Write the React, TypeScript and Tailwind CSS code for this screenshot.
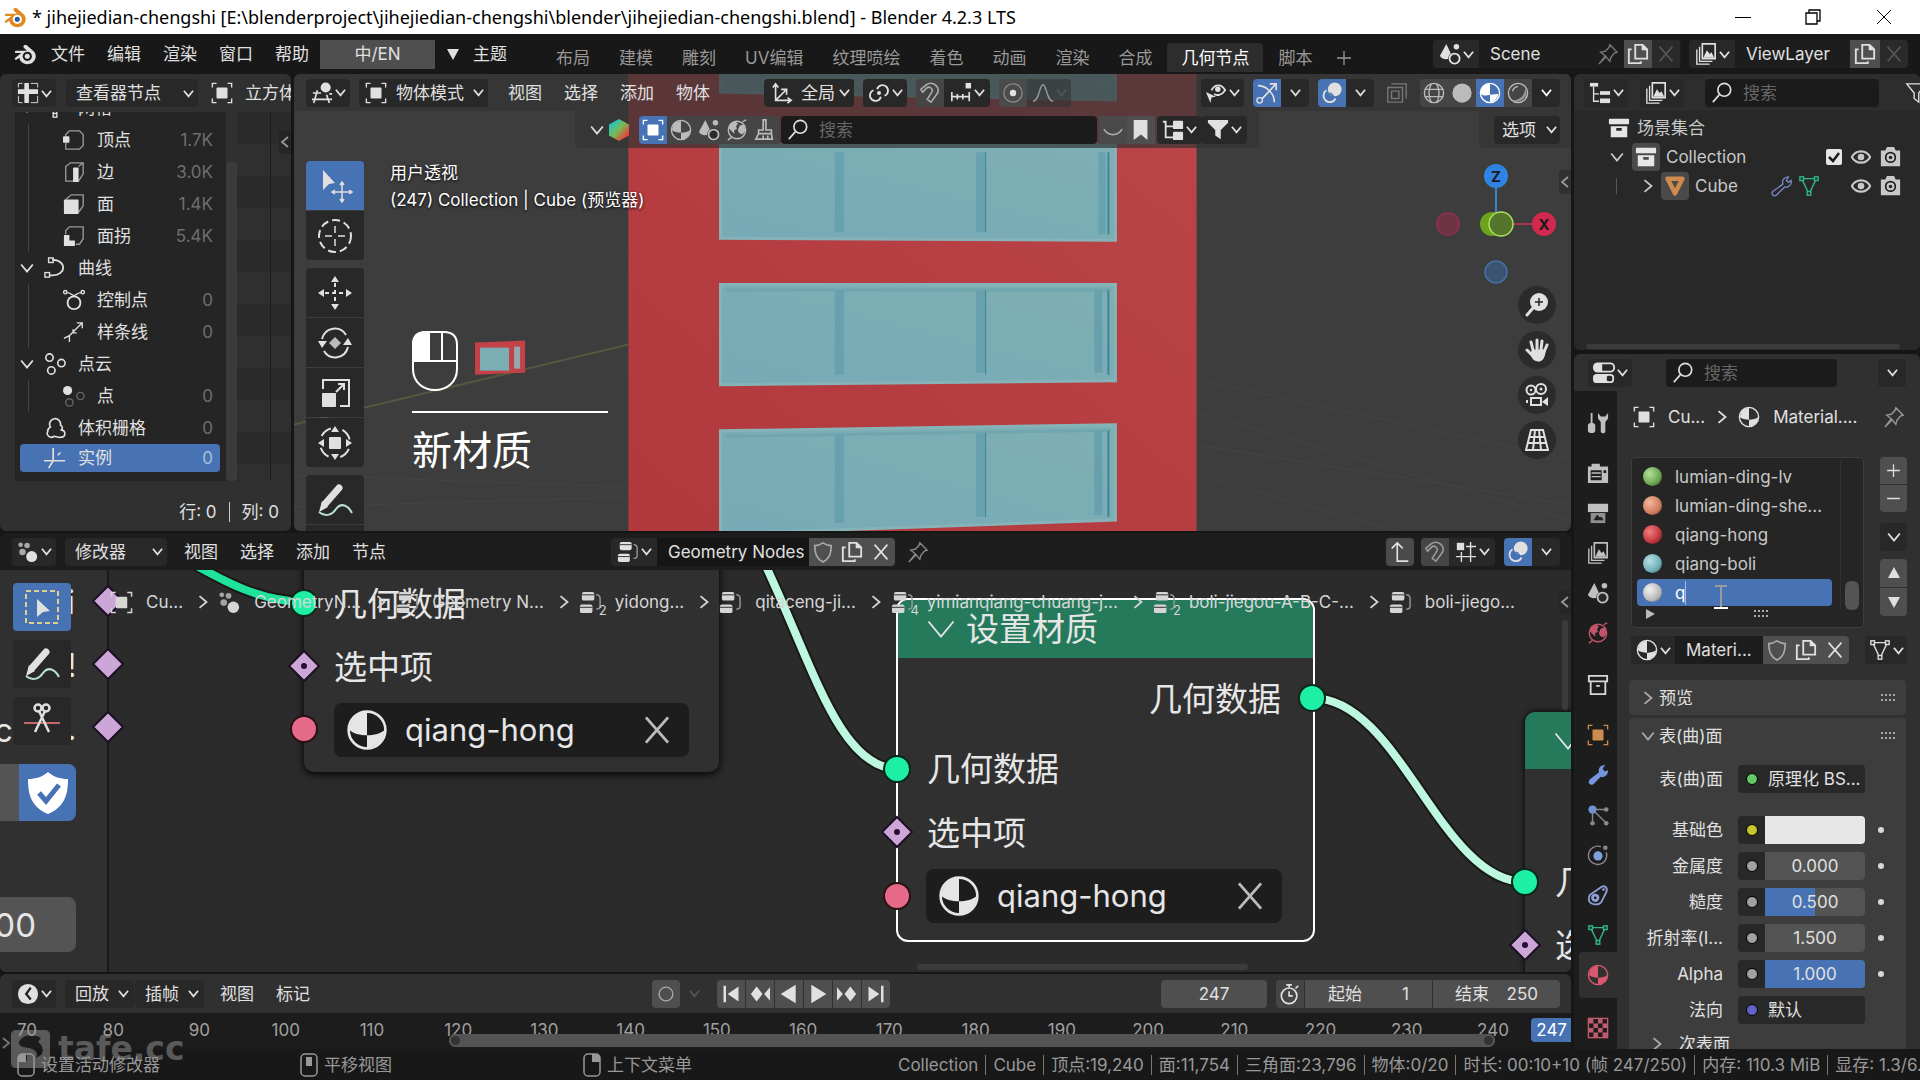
import type { ReactNode } from "react";
import clsx from "clsx";

const S = { fill: "none", stroke: "currentColor", strokeWidth: 1.5 } as const;
const F = { fill: "currentColor" } as const;

const icons: Record<string, ReactNode> = {
  sheet: (
    <>
      <path {...F} d="M8 1h5v7h10v5H13v10H8V13H1V8h7z" />
      <path {...S} strokeWidth={1} d="M1.5 6V1.5H6M15 1.5h7.5V6M1.5 15v7.5H6M15 22.5h7.5V15" />
    </>
  ),
  object: (
    <>
      <rect {...F} x="6" y="6" width="12" height="12" rx="1" />
      <path {...S} d="M1.5 6V1.5H6M18 1.5h4.5V6M1.5 18v4.5H6M18 22.5h4.5V18" />
    </>
  ),
  view3d: (
    <>
      <circle {...F} cx="16" cy="6" r="5.5" />
      <path {...S} strokeWidth={1.8} d="M2 12h9M1 19h22M7 9 3 23M17 14l3 9M20 13h3" />
    </>
  ),
  vertex: (
    <>
      <path {...S} stroke="#999" d="M7 2h11l4 4v12l-4 4H3V15M3 8V6l4-4" />
      <rect {...F} x="0" y="8" width="7" height="7" rx="1" />
    </>
  ),
  edge: (
    <>
      <path {...S} stroke="#999" d="M3 6l5-4h14v12l-5 8H3zM17 6l5-4" />
      <rect {...F} x="11" y="7" width="6" height="16" rx="1" />
    </>
  ),
  face: (
    <>
      <path {...S} stroke="#999" d="M3 7l6-5h13v12l-5 7" />
      <rect {...F} x="1" y="7" width="16" height="16" rx="1" />
    </>
  ),
  corner: (
    <>
      <path {...S} stroke="#999" d="M3 10V6l4-4h15v13l-4 6h-4" />
      <path {...F} d="M1 11h6v6h6v6H1z" />
    </>
  ),
  curve: (
    <>
      <path {...S} strokeWidth={2} d="M9 3c16 0 16 17 0 17H6" />
      <rect {...S} x="5" y="1" width="5" height="5" />
      <rect {...S} x="1" y="17" width="5" height="5" />
    </>
  ),
  ctrl: (
    <>
      <circle {...S} strokeWidth={2} cx="12" cy="15" r="7" />
      <path {...S} d="M4 4c5 0 5 3 8 3s3-3 8-3" />
      <circle {...S} cx="2.5" cy="3.5" r="1.8" />
      <circle {...S} cx="21.5" cy="3.5" r="1.8" />
    </>
  ),
  spline: <path {...S} d="M1 19l6-3 5-5 9-9M15 2h6v6M7 16v7M11 9v4h4" />,
  points: (
    <>
      <circle {...S} strokeWidth={1.8} cx="6" cy="5" r="4" />
      <circle {...S} strokeWidth={1.8} cx="19" cy="11" r="4" />
      <circle {...S} strokeWidth={1.8} cx="8" cy="19" r="4" />
    </>
  ),
  point: (
    <>
      <circle {...F} cx="5" cy="6" r="5" />
      <circle {...S} stroke="#666" cx="19" cy="12" r="4" />
      <circle {...S} stroke="#666" cx="7" cy="19" r="4" />
    </>
  ),
  cloud: <path {...S} strokeWidth={1.8} d="M7 11a6 6 0 1 1 11-2c3 1 2 4 1 5 5 1 5 8 0 8-3 1-6-1-8-1-4 3-9-1-7-5 0-3 1-4 3-5z" />,
  axes: <path {...S} strokeWidth={1.8} d="M10 1v14M10 15H0M10 15h13M10 15l-5 8M15 9l3-3" />,
  orient: <path {...S} strokeWidth={1.8} d="M5 3v17h16M2 6l3-4 3 4M18 17l4 3-4 3M5 20 16 9M11 8h6v6" />,
  pivot: (
    <>
      <path {...S} strokeWidth={2} d="M10 8a6 6 0 1 1 8 7M14 16a6 6 0 1 1-8-7" />
      <circle {...F} cx="12" cy="12" r="2.2" />
    </>
  ),
  magnet: <path {...S} strokeWidth={1.8} d="M2 8l6-5c7-5 17 3 11 11l-6 8-4-3 5-8c2-4-3-7-6-4l-4 4z" />,
  snapinc: (
    <>
      <path {...S} strokeWidth={1.8} d="M2 11v10M8 13v6M14 13v6M21 11v10M2 16h19" />
      <rect {...F} x="17" y="1" width="6" height="6" />
    </>
  ),
  snapgrid: (
    <>
      <path {...S} d="M7 12v11M17 1v22M12 6h11M1 17h22" />
      <rect {...F} x="2" y="2" width="8" height="8" />
    </>
  ),
  prop: (
    <>
      <circle {...S} stroke="#888" cx="12" cy="12" r="10" />
      <circle {...F} cx="12" cy="12" r="3.5" />
    </>
  ),
  falloff: <path {...S} d="M1 21C8 21 8 3 12 3s4 18 11 18" />,
  visible: (
    <>
      <path {...S} strokeWidth={2} d="M7 9c4-7 11-7 15 0-4 6-9 6-12 4" />
      <circle {...F} cx="14" cy="8" r="3" />
      <path {...F} d="M1 11l11 5-5 1-1 6z" />
    </>
  ),
  gizmo: (
    <>
      <path {...S} strokeWidth={1.8} d="M2 4c9 0 18 8 18 18M5 20 21 3M15 2h7v7" />
      <circle {...S} fill="#4772b3" cx="4" cy="20" r="3" />
    </>
  ),
  overlay: (
    <>
      <circle {...F} cx="15" cy="8" r="7.5" />
      <path {...S} strokeWidth={2} d="M6 9a7 7 0 1 0 10 9" />
      <path {...S} stroke="#4772b3" d="M9 12a7 7 0 0 1 5 5" />
    </>
  ),
  xray: <path {...S} d="M2 6h16v16H2zM6 2h16v16M6 14V10h8v8H6z" />,
  wire: (
    <>
      <circle {...S} cx="12" cy="12" r="10.5" />
      <path {...S} d="M2 8h20M2 16h20M9 2c-3 6-3 14 0 20M15 2c3 6 3 14 0 20" />
    </>
  ),
  solid: <circle {...F} cx="12" cy="12" r="10.5" />,
  matprev: (
    <>
      <circle {...S} cx="12" cy="12" r="10.5" />
      <path {...F} d="M12 14V2a10 10 0 0 0-10 11c3 2 6 2 10 1zM12 14v8a10 10 0 0 0 9-9z" />
    </>
  ),
  rendered: (
    <>
      <circle {...S} cx="12" cy="12" r="10.5" />
      <path {...S} d="M6 10c1-3 3-5 6-5" />
      <path {...F} d="M20 7a10 10 0 0 1-14 13c8 0 13-5 14-13z" opacity=".7" />
    </>
  ),
  material: (
    <>
      <circle {...S} cx="12" cy="12" r="10.5" />
      <path {...F} d="M12 2v13C8 15 4 14 2 12A10 10 0 0 1 12 2zM12 15c4 0 8-1 10-3a10 10 0 0 1-10 10z" />
    </>
  ),
  scene: (
    <>
      <path {...F} d="M8 1l6 13c-2 5-11 5-13 0z" />
      <circle {...F} cx="19" cy="4" r="3" />
      <circle cx="17" cy="17" r="7" fill="#2a2a2a" />
      <circle {...S} strokeWidth={2} cx="17" cy="17" r="5.5" />
    </>
  ),
  world: (
    <>
      <circle {...S} cx="12" cy="12" r="9.5" />
      <path {...F} d="M4 6c3-3 7-4 9-1l-2 3 1 3-3 1v4l-3-3-3-3zM15 7l5-1 1 7-3 4-4-2-1-3z" />
      <path {...S} d="M18 3l4-2M2 23l4-3" />
    </>
  ),
  brush: <path {...S} strokeWidth={1.8} d="M10 1h3v11h6v4H5v-4h5zM5 16l-3 6h18l-1-6M10 22v-4M15 22v-4" />,
  search: (
    <>
      <circle {...S} strokeWidth={1.8} cx="14.5" cy="8.5" r="7" />
      <path {...S} strokeWidth={1.8} d="M9 14l-7 8" />
    </>
  ),
  arc: <path {...S} strokeWidth={1.8} d="M2 11c5 8 15 8 20 0" />,
  bookmark: <path {...F} d="M4 1h15v22l-7-6-8 6z" />,
  tree: (
    <>
      <path {...S} strokeWidth={2} d="M1 3h4M4 2v18h8M4 8h8" />
      <rect {...F} x="12" y="2" width="11" height="9" rx="1" />
      <rect {...F} x="12" y="14" width="11" height="9" rx="1" />
    </>
  ),
  outliner: (
    <>
      <path {...S} d="M5 5v16h6M5 13h6" />
      <rect {...F} x="1" y="1" width="9" height="4" />
      <rect {...F} x="12" y="10" width="11" height="4" />
      <rect {...F} x="12" y="18" width="11" height="5" />
    </>
  ),
  funnel: <path {...F} d="M1 1h22v3l-8 8v10l-6-4v-6L1 4z" />,
  funnelLine: <path {...S} d="M2 2h21l-8 10v10l-5-4v-6z" />,
  layers: (
    <>
      <path {...S} strokeWidth={1.8} d="M8 1h14v16H8z" />
      <path {...F} d="M9 16l4-8 3 4 2-2 3 6z" />
      <path {...S} d="M5 4v16h14M2 7v16h14" />
    </>
  ),
  copy: (
    <>
      <path {...S} strokeWidth={2} d="M9 2h8l5 5v10H9z" />
      <path {...F} d="M16 1l7 7h-7z" />
      <path {...S} strokeWidth={2} d="M5 7H2v15h13v-2" />
    </>
  ),
  close: <path {...S} strokeWidth={1.8} d="M5 4l14 16M19 4 5 20" />,
  pin: <path {...S} d="M14 2l8 8-3 1-4 5-1 4-4-5-8 8 7-9-5-4 5-1 4-4z" />,
  shield: <path {...S} strokeWidth={1.8} d="M12 2c3 2 6 3 9 3 0 9-2 14-9 18C5 19 3 14 3 5c3 0 6-1 9-3z" />,
  collection: (
    <>
      <rect {...F} x="1" y="2" width="22" height="6" rx="1" />
      <path {...F} fillRule="evenodd" d="M3 10h18v12H3zm6 2v3h6v-3z" />
    </>
  ),
  archive: <path {...S} strokeWidth={2} d="M2 2h20v6H2zM4 8v14h16V8M10 13h4" />,
  cone: <path {...S} strokeWidth={5} strokeLinejoin="round" d="M4 4h16l-8 16z" />,
  wrench: <path {...S} d="M14 10c-1-4 1-8 6-8l-2 4 2 2 3-2c1 5-3 8-7 7L7 22c-3 2-6-1-4-4z" />,
  wrenchFill: <path {...F} d="M13 9c-1-5 2-8 7-8l-3 4 2 3 4-1c0 5-4 8-8 7l-8 8c-3 2-7-1-4-5z" />,
  mesh: (
    <>
      <path {...S} d="M4 4h16M4 4l8 17 8-17" />
      <rect {...S} fill="#2a2a2a" x="2" y="2" width="4" height="4" />
      <rect {...S} fill="#2a2a2a" x="18" y="2" width="4" height="4" />
      <rect {...S} fill="#2a2a2a" x="10" y="18" width="4" height="4" />
    </>
  ),
  eye: (
    <>
      <path {...S} strokeWidth={2.5} d="M1 12c5-9 17-9 22 0-5 9-17 9-22 0z" />
      <circle {...F} cx="12" cy="12" r="4" />
    </>
  ),
  camera: (
    <>
      <path {...F} d="M1 5h5l2-4h8l2 4h5v18H1z" />
      <circle cx="12" cy="13" r="5.5" fill="none" stroke="#222" strokeWidth="2" />
      <circle cx="12" cy="13" r="2" fill="#222" />
    </>
  ),
  props: (
    <>
      <rect {...S} strokeWidth={2} x="1" y="1.5" width="22" height="9" rx="4" />
      <path {...F} d="M1 6c0-5 3-5 9-5v10C4 11 1 11 1 6z" />
      <rect {...F} x="0" y="13" width="23" height="10" rx="4" />
      <rect x="15" y="15" width="6" height="6" rx="2" fill="#2a2a2a" />
    </>
  ),
  tool: (
    <>
      <path {...S} strokeWidth={2} d="M5 1v11" />
      <rect {...F} x="1" y="12" width="8" height="11" rx="3" />
      <path {...F} d="M12 1v6l3 4v10c0 3 5 3 5 0V11l3-4V1l-3 4h-5z" />
    </>
  ),
  render: (
    <>
      <path {...F} fillRule="evenodd" d="M1 5h4V2h9v3h9v18H1zm3 4v11h12V9zm14 0v3h3V9z" />
      <path {...S} d="M5 12h10M5 16h10" />
    </>
  ),
  output: (
    <>
      <path {...F} d="M1 2h22v9H1z" />
      <path {...F} d="M4 12h16v11H4z" opacity=".7" />
      <path fill="#222" d="M7 20l4-6 3 3 2-1 2 4z" />
    </>
  ),
  particles: (
    <>
      <path {...S} stroke="#888" d="M6 6h15M6 6v15M6 6l14 14" />
      <circle {...F} cx="6" cy="6" r="4.5" />
      <g fill="#888">
        <circle cx="21" cy="6" r="2.5" />
        <circle cx="6" cy="21" r="2.5" />
        <circle cx="21" cy="21" r="2.5" />
      </g>
    </>
  ),
  physics: (
    <>
      <path {...S} stroke="#888" d="M15 3a10 10 0 1 0 6 6" />
      <circle {...F} cx="12" cy="13" r="5" />
      <circle cx="20" cy="4" r="2.5" fill="#888" />
    </>
  ),
  constraint: (
    <>
      <path {...S} strokeWidth={2} d="M3 12 16 3c4-2 7 2 5 6l-5 10c-3 5-12 4-14-1 0-2 0-4 1-6z" />
      <circle {...S} strokeWidth={3} cx="9" cy="15" r="3" />
      <circle {...F} cx="18" cy="6" r="1.5" />
    </>
  ),
  checker: (
    <>
      <rect {...S} x="1.5" y="1.5" width="21" height="21" />
      <path {...F} d="M2 2h5v5H2zM12 2h5v5h-5zM7 7h5v5H7zM17 7h5v5h-5zM2 12h5v5H2zM12 12h5v5h-5zM7 17h5v5H7zM17 17h5v5h-5z" />
    </>
  ),
  geonodes: (
    <>
      <circle {...F} cx="16" cy="17" r="6" />
      <g {...F} opacity=".7">
        <circle cx="4" cy="4" r="2.5" />
        <circle cx="11" cy="5" r="3" />
        <circle cx="6" cy="12" r="3.5" />
      </g>
    </>
  ),
  nodetree: (
    <>
      <rect {...F} x="3" y="1" width="13" height="9" rx="2" />
      <rect {...F} x="1" y="14" width="13" height="9" rx="2" />
      <path d="M3 4h13M1 17h13" stroke="#2a2a2a" />
      <path {...S} stroke="#999" d="M18 4c3 0 4 1 4 4v8c0 2-1 3-4 3" />
    </>
  ),
  parent: <path {...S} strokeWidth={1.8} d="M3 8l6-6 6 6M9 2v20h12" />,
  clock: (
    <>
      <circle {...F} cx="12" cy="12" r="11" />
      <path d="M15 5l-5 7 5 6" fill="none" stroke="#222" strokeWidth="2.5" />
    </>
  ),
  stopwatch: (
    <>
      <circle {...S} strokeWidth={1.8} cx="11" cy="14" r="8.5" />
      <path {...S} strokeWidth={1.8} d="M8 2h6M11 2v3M18 6l3-3M11 9v5h4" />
    </>
  ),
  record: <circle {...S} cx="12" cy="12" r="7.5" />,
  first: <path {...F} d="M3 2h3v20H3zM21 3v18L8 12z" />,
  prevKey: <path {...F} d="M8 3l7 9-7 9-7-9zM24 4v16l-7-8z" />,
  back: <path {...F} d="M20 1v22L2 12z" />,
  play: <path {...F} d="M4 1v22l18-11z" />,
  nextKey: <path {...F} d="M16 3l7 9-7 9-7-9zM0 4v16l7-8z" />,
  last: <path {...F} d="M21 2h-3v20h3zM3 3v18l13-9z" />,
  plus: <path {...S} strokeWidth={1.8} d="M12 3v18M3 12h18" />,
  minus: <path {...S} strokeWidth={1.8} d="M3 12h18" />,
  zoom: (
    <>
      <circle {...F} cx="14" cy="9" r="9" />
      <path {...S} strokeWidth={3} strokeLinecap="round" d="M8 15l-6 7" />
      <path d="M14 5v8M10 9h8" stroke="#222" strokeWidth="1.5" />
    </>
  ),
  hand: (
    <g {...S} strokeWidth={3} strokeLinecap="round">
      <path d="M8 12 6 4M12 11V2M16 12l1-9M19 14l3-7M7 17l-5-5" />
      <path fill="currentColor" d="M8 13h11c0 5-2 9-6 9s-5-3-6-6z" />
    </g>
  ),
  movie: (
    <>
      <circle {...S} strokeWidth={2} cx="6" cy="7" r="4.5" />
      <circle {...S} strokeWidth={2} cx="16" cy="6" r="5" />
      <circle {...F} cx="6" cy="7" r="1.2" />
      <circle {...F} cx="16" cy="6" r="1.5" />
      <path {...S} strokeWidth={2} d="M6 15h10v7H6zM2 17v3" />
      <path {...F} d="M23 14v9l-6-4z" />
    </>
  ),
  persp: <path {...S} strokeWidth={2} d="M6 2h12l5 20H1zM4 9h16M3 15h18M10 2 8 22M14 2l2 20" />,
};

function Icon({ name, className = "size-[22px]" }: { name: string; className?: string }) {
  return (
    <svg viewBox="0 0 24 24" className={clsx("shrink-0", className)} aria-hidden="true">
      {icons[name]}
    </svg>
  );
}

function Chevron({ className = "size-3", dir = "down" }: { className?: string; dir?: "down" | "right" | "left" }) {
  const d = { down: "M1 3l5 6 5-6", right: "M3 1l6 5-6 5", left: "M9 1 3 6l6 5" }[dir];
  return (
    <svg viewBox="0 0 12 12" className={clsx("shrink-0", className)} aria-hidden="true">
      <path d={d} fill="none" stroke="currentColor" strokeWidth="1.8" vectorEffect="non-scaling-stroke" />
    </svg>
  );
}

// editor type button and other icon + arrow menus
function IconMenu({ name, label, className }: { name: string; label: string; className?: string }) {
  return (
    <button
      aria-label={label}
      className={clsx("flex h-7 w-11 shrink-0 items-center justify-center gap-[2px] rounded bg-[#282828]", className)}
    >
      <Icon name={name} />
      <Chevron className="size-[11px]" />
    </button>
  );
}

function IconButton({ name, label, className }: { name: string; label: string; className?: string }) {
  return (
    <button aria-label={label} className={clsx("flex h-7 w-7 shrink-0 items-center justify-center", className)}>
      <Icon name={name} />
    </button>
  );
}

function Dropdown({ label, value, className }: { label: string; value: string; className?: string }) {
  return (
    <div className={clsx("relative flex h-7 shrink-0 items-center rounded bg-[#282828]", className)}>
      <select aria-label={label} className="h-full w-full appearance-none bg-transparent outline-none">
        <option>{value}</option>
      </select>
      <Chevron className="pointer-events-none absolute right-1 size-[11px]" />
    </div>
  );
}

function Search({ className }: { className: string }) {
  return (
    <label className={clsx("flex h-7 items-center rounded bg-[#1b1b1b] pl-[6px]", className)}>
      <Icon name="search" />
      <input
        type="text"
        aria-label="搜索"
        placeholder="搜索"
        className="min-w-0 flex-1 bg-transparent pl-[10px] placeholder:text-[#666] outline-none"
      />
    </label>
  );
}

function Menus({ items }: { items: string[] }) {
  return (
    <nav className="flex shrink-0">
      {items.map((item) => (
        <button key={item} className="w-14 text-center">
          {item}
        </button>
      ))}
    </nav>
  );
}

function BlenderLogo({ className, eye = "#fff" }: { className: string; eye?: string }) {
  return (
    <svg viewBox="0 0 24 24" className={clsx("shrink-0", className)} aria-hidden="true">
      <path
        fill="currentColor"
        d="M11 2.500c.800-.800 2-.800 3 0l8 7c3 4 2 9-2 12-4 2.500-9 2-12-1-1.500-1.500-2-3-2-4.500L3 18c-1.500 1-3-.500-1.500-2L8 11H2.500C.500 11 .500 8.500 2.500 8.500H14l-3-3c-1-1-1-2 0-3z"
      />
      <circle cx="14.500" cy="14.500" r="5" fill={eye} />
      <circle cx="14.500" cy="14.500" r="2.800" fill={eye === "#fff" ? "#2a5d9c" : "currentColor"} />
    </svg>
  );
}

function TitleBar() {
  return (
    <header className="flex h-[34px] shrink-0 items-center bg-white text-black">
      <BlenderLogo className="ml-1 size-[22px] text-[#e08a1e]" />
      <h1 className="ml-[6px] flex-1 truncate font-['Noto_Sans'] text-[18px]">
        * jihejiedian-chengshi [E:\blenderproject\jihejiedian-chengshi\blender\jihejiedian-chengshi.blend] - Blender
        4.2.3 LTS
      </h1>
      <button aria-label="Minimize" className="flex h-full w-[70px] items-center justify-center">
        <svg viewBox="0 0 16 16" className="size-4">
          <path d="M0 8.500h16" stroke="#000" />
        </svg>
      </button>
      <button aria-label="Restore" className="flex h-full w-[70px] items-center justify-center">
        <svg viewBox="0 0 16 16" className="size-4" fill="none" stroke="#000" strokeWidth="1.300">
          <path d="M1 4h11v11H1zM4 4V1h11v11h-3" />
        </svg>
      </button>
      <button aria-label="Close" className="flex h-full w-[72px] items-center justify-center">
        <svg viewBox="0 0 16 16" className="size-4">
          <path d="M1 1l14 14M15 1 1 15" stroke="#000" />
        </svg>
      </button>
    </header>
  );
}

const workspaces = ["布局", "建模", "雕刻", "UV编辑", "纹理喷绘", "着色", "动画", "渲染", "合成", "几何节点", "脚本"];

function TopBar() {
  return (
    <div className="flex h-10 shrink-0 items-center bg-[#181818]">
      <BlenderLogo className="ml-[14px] size-[22px]" eye="#181818" />
      <div className="ml-1">
        <Menus items={["文件", "编辑", "渲染", "窗口", "帮助"]} />
      </div>
      <button className="h-[29px] w-[115px] shrink-0 bg-[#4f4f4f] text-center">中/EN</button>
      <button className="ml-3 flex shrink-0 items-center gap-[14px]">
        <svg viewBox="0 0 12 12" className="size-3">
          <path d="M0 1h12L6 12z" fill="currentColor" />
        </svg>
        主题
      </button>
      <div role="tablist" className="ml-[35px] flex shrink-0 gap-px self-end pb-[2px]">
        {workspaces.map((w) => (
          <button
            key={w}
            role="tab"
            aria-selected={w === "几何节点"}
            className={clsx(
              "h-[29px] rounded-t px-[14px] leading-7",
              w === "几何节点" ? "bg-[#2d2d2d] text-white" : "text-[#989898]",
            )}
          >
            {w}
          </button>
        ))}
        <button aria-label="添加工作区" className="px-[10px] text-[#989898]">
          <svg viewBox="0 0 14 14" className="size-[14px]">
            <path d="M7 0v14M0 7h14" stroke="currentColor" strokeWidth="1.300" />
          </svg>
        </button>
      </div>
      <div className="mr-3 ml-auto flex shrink-0 gap-2">
        <div className="flex w-[248px] items-center overflow-hidden rounded bg-[#1d1d1d]">
          <IconMenu name="scene" label="浏览场景" className="w-[46px] rounded-none" />
          <input aria-label="场景" defaultValue="Scene" className="ml-[11px] w-[107px] bg-transparent outline-none" />
          <Icon name="pin" className="mr-[5px] size-[22px] text-[#777]" />
          <IconButton name="copy" label="新建场景" className="bg-[#4f4f4f]" />
          <IconButton name="close" label="删除场景" className="bg-[#2a2a2a] text-[#555]" />
        </div>
        <div className="flex w-[219px] items-center overflow-hidden rounded bg-[#1d1d1d]">
          <IconMenu name="layers" label="浏览视图层" className="w-[46px] rounded-none" />
          <input aria-label="视图层" defaultValue="ViewLayer" className="ml-[11px] w-[104px] bg-transparent outline-none" />
          <IconButton name="copy" label="新建视图层" className="w-[30px] bg-[#4f4f4f]" />
          <IconButton name="close" label="删除视图层" className="bg-[#2a2a2a] text-[#555]" />
        </div>
      </div>
    </div>
  );
}

type TreeRow = { level: 1 | 2; icon: string; name: string; value?: string; open?: boolean; selected?: boolean };

const domains: TreeRow[] = [
  { level: 1, icon: "mesh", name: "网格", open: true },
  { level: 2, icon: "vertex", name: "顶点", value: "1.7K" },
  { level: 2, icon: "edge", name: "边", value: "3.0K" },
  { level: 2, icon: "face", name: "面", value: "1.4K" },
  { level: 2, icon: "corner", name: "面拐", value: "5.4K" },
  { level: 1, icon: "curve", name: "曲线", open: true },
  { level: 2, icon: "ctrl", name: "控制点", value: "0" },
  { level: 2, icon: "spline", name: "样条线", value: "0" },
  { level: 1, icon: "points", name: "点云", open: true },
  { level: 2, icon: "point", name: "点", value: "0" },
  { level: 1, icon: "cloud", name: "体积栅格", value: "0" },
  { level: 1, icon: "axes", name: "实例", value: "0", selected: true },
];

function Spreadsheet() {
  return (
    <section className="flex w-[291px] shrink-0 flex-col overflow-hidden rounded-md bg-[#303030]">
      <div className="flex h-[38px] shrink-0 items-center pl-3">
        <IconMenu name="sheet" label="编辑器类型" />
        <Dropdown label="几何评估" value="查看器节点" className="ml-[10px] w-[132px] pl-[10px]" />
        <Icon name="object" className="ml-[13px] size-[22px]" />
        <span className="ml-3 shrink-0">立方体</span>
      </div>
      <div className="flex min-h-0 flex-1">
        <ul className="ml-[15px] flex w-[211px] flex-col justify-end overflow-hidden bg-[#252525] pb-2">
          {domains.map((d) => (
            <li
              key={d.name}
              className={clsx(
                "mr-[6px] ml-[5px] flex shrink-0 items-center",
                d.selected ? "mb-px h-7 rounded bg-[#4772b3]" : "h-8",
              )}
            >
              {d.level === 2 ? (
                <span className="ml-2 h-full w-[35px] border-l border-[#444]" />
              ) : (
                <span className="flex w-6">{d.open && <Chevron className="size-[14px]" />}</span>
              )}
              <Icon name={d.icon} />
              <span className="ml-3 flex-1">{d.name}</span>
              <span className={clsx("mr-[7px]", d.selected ? "text-[#a9bedd]" : "text-[#6e6e6e]")}>{d.value}</span>
            </li>
          ))}
        </ul>
        <div className="mt-[50px] w-[11px] rounded bg-[#3b3b3b]" />
        <div className="flex flex-1 bg-[repeating-linear-gradient(#2b2b2b_0_32px,#2f2f2f_32px_64px)]">
          <div className="w-[34px] border-r border-[#1d1d1d]" />
          <button aria-label="侧栏" className="mt-[18px] ml-auto flex h-6 w-3 items-center rounded-l bg-[#252525] text-[#999]">
            <Chevron dir="left" />
          </button>
        </div>
      </div>
      <footer className="flex h-[50px] shrink-0 items-center justify-end gap-3 pt-3 pr-3">
        <span>行: 0</span>
        <span className="h-5 w-px bg-[#ccc]" />
        <span>列: 0</span>
      </footer>
    </section>
  );
}

function SceneRender() {
  return (
    <svg
      viewBox="0 0 1277 456"
      preserveAspectRatio="xMidYMid slice"
      className="absolute inset-0 size-full"
      aria-hidden="true"
    >
      <defs>
        <linearGradient id="wall" x1="1" y1="0" x2="0" y2="1">
          <stop offset="0" stopColor="#bb4549" />
          <stop offset="1" stopColor="#b1383d" />
        </linearGradient>
        <linearGradient id="glass" x1="1" y1="0" x2="0" y2="1">
          <stop offset="0" stopColor="#7dafb3" />
          <stop offset="1" stopColor="#78aab7" />
        </linearGradient>
      </defs>
      <rect width="1277" height="456" fill="#3d3d3d" />
      <g stroke="#444" fill="none">
        <path d="M902 337 1277 446M902 305l375 80M902 400l200 56M902 370l375 60M0 400l335 12M0 432l335-10" />
        <path d="M0 350 335 270" stroke="#55583f" strokeWidth="2" />
      </g>
      <path d="M335 0h567v456H335z" fill="url(#wall)" />
      <g fill="url(#glass)" stroke="#86b3b8" strokeWidth="3">
        <path d="M427 -10h394v36L427 18z" />
        <path d="M427 70h394v96l-394-2z" />
        <path d="M427 210h394v96l-394 4z" />
        <path d="M427 356l394-6v95l-394 14z" />
      </g>
      <g fill="#649fac" opacity=".8">
        <path d="M541 78h9v80h-9zM682 78h10v80h-10zM804 78h7v82h-7z" />
        <path d="M541 216h9v84h-9zM682 216h10v82h-10zM800 216h8v82h-8z" />
        <path d="M541 360h9v88h-9zM682 358h10v84h-10zM800 356h8v84h-8z" />
        <path d="M432 214h384v3H432zM432 360l384-6v3l-384 6z" opacity=".6" />
      </g>
      <path
        d="M813 78h2v82h-2zM813 216h2v84h-2zM813 356h2v86h-2zM691 78h1v80h-1zM691 216h1v84h-1zM691 358h1v84h-1z"
        fill="#3f8696"
      />
      <path d="M182 268l50-2v32l-50 2z" fill="#c24248" />
      <path d="M187 273h29v23h-29z" fill="#7badb5" />
      <path d="M221 272h6v22h-6z" fill="#93a9ae" />
    </svg>
  );
}

const toolGroups = [["select", "cursor"], ["move", "rotate", "scale", "transform"], ["annotate", "measure"]];

const toolArt: Record<string, ReactNode> = {
  select: (
    <>
      <path fill="currentColor" d="M6 2l12 13-6 1-6 6z" />
      <path {...S} d="M25 15v18M16 24h18M23 17l2-3 2 3M23 31l2 3 2-3M18 22l-3 2 3 2M32 22l3 2-3 2" />
    </>
  ),
  cursor: (
    <>
      <circle {...S} strokeWidth={2} cx="18" cy="18" r="16" strokeDasharray="8 4" />
      <path {...S} d="M18 8v7M18 21v7M8 18h7M21 18h7" />
    </>
  ),
  move: (
    <>
      <path {...F} d="M18 1l4 6h-8zM18 35l4-6h-8zM1 18l6-4v8zM35 18l-6-4v8z" />
      <path {...S} strokeWidth={2} strokeDasharray="4 3" d="M18 8v20M8 18h20" />
    </>
  ),
  rotate: (
    <>
      <path {...S} strokeWidth={2} d="M5 14c3-12 18-14 24-4M31 22c-3 12-18 14-24 4" />
      <path {...F} d="M1 16h9l-5 7zM26 20h9l-4-7z" />
      <path fill="#bbb" d="M18 12l6 6-6 6-6-6z" />
    </>
  ),
  scale: (
    <>
      <rect {...F} x="5" y="18" width="14" height="14" rx="1" />
      <path {...S} strokeWidth={2} d="M6 14V5h26v26h-9M19 17l7-7M21 9h6v6" />
    </>
  ),
  transform: (
    <>
      <circle {...S} strokeWidth={2} cx="18" cy="18" r="15" strokeDasharray="12 12" strokeDashoffset="-6" />
      <rect {...F} x="12" y="12" width="12" height="12" rx="1" />
      <path {...F} d="M18 1l4 6h-8zM18 35l4-6h-8zM1 18l6-4v8zM35 18l-6-4v8z" />
    </>
  ),
  annotate: (
    <>
      <path {...S} strokeWidth={7} strokeLinecap="round" d="M22 6 8 22" />
      <path {...F} d="M5 19l6 6-9 5z" />
      <path {...S} stroke="#b6e0cf" strokeWidth={2} d="M2 30c7 6 14 2 17-3 6-8 13-2 16 4" />
    </>
  ),
  measure: null,
  boxselect: (
    <>
      <rect {...S} stroke="#e2cf8d" strokeWidth={2} strokeDasharray="5 3" x="2" y="2" width="32" height="32" />
      <path {...F} d="M13 10l13 12-7 1-6 5z" />
    </>
  ),
  cut: (
    <>
      <path d="M0 20h36" stroke="#c4676b" strokeWidth="2" />
      <g {...S} strokeWidth={2.5}>
        <path d="M15 8l10 21M21 8 11 29" />
        <circle cx="14" cy="5" r="3.500" />
        <circle cx="22" cy="5" r="3.500" />
      </g>
    </>
  ),
};

function ToolIcon({ name }: { name: string }) {
  return (
    <svg viewBox="0 0 36 36" className="size-9" aria-hidden="true">
      {toolArt[name]}
    </svg>
  );
}

function ViewportHeader() {
  return (
    <>
      <div className="flex h-[37px] shrink-0 items-center gap-[9px] bg-[#333333]/70 pr-[11px] pl-3">
        <IconMenu name="view3d" label="编辑器类型" />
        <div className="flex h-7 w-[129px] shrink-0 items-center rounded bg-[#282828] pl-[6px]">
          <Icon name="object" />
          <Dropdown label="模式" value="物体模式" className="flex-1 pl-[9px]" />
        </div>
        <Menus items={["视图", "选择", "添加", "物体"]} />
        <div className="ml-[34px] flex h-7 w-[90px] shrink-0 items-center rounded bg-[#282828] pl-[7px]">
          <Icon name="orient" />
          <Dropdown label="变换方向" value="全局" className="flex-1 pl-2" />
        </div>
        <IconMenu name="pivot" label="轴心点" />
        <div className="flex shrink-0 overflow-hidden rounded">
          <IconButton name="magnet" label="吸附" className="bg-[#454545] text-[#aaa]" />
          <IconMenu name="snapinc" label="吸附到" className="w-[46px] rounded-none" />
        </div>
        <div className="flex shrink-0 overflow-hidden rounded">
          <IconButton name="prop" label="衰减编辑" className="bg-[#4a4a4a]" />
          <button
            aria-label="衰减类型"
            className="flex h-7 w-11 items-center justify-center gap-[2px] bg-[#333333]/60 text-[#999]"
          >
            <Icon name="falloff" />
            <Chevron className="size-[11px] text-[#555]" />
          </button>
        </div>
        <IconMenu name="visible" label="可选性与可见性" className="ml-auto w-[43px]" />
        <div className="flex shrink-0 overflow-hidden rounded bg-[#282828]">
          <IconButton name="gizmo" label="Gizmo" className="bg-[#4772b3]" />
          <button aria-label="Gizmo 选项" className="flex w-7 items-center justify-center">
            <Chevron className="size-[11px]" />
          </button>
        </div>
        <div className="flex shrink-0 overflow-hidden rounded bg-[#282828]">
          <IconButton name="overlay" label="叠加层" className="bg-[#4772b3]" />
          <button aria-label="叠加层选项" className="flex w-7 items-center justify-center">
            <Chevron className="size-[11px]" />
          </button>
        </div>
        <IconButton name="xray" label="透视模式" className="text-[#777]" />
        <div className="flex shrink-0 overflow-hidden rounded bg-[#282828] text-[#bbb]">
          <IconButton name="wire" label="线框" className="bg-[#454545]" />
          <IconButton name="solid" label="实体" className="bg-[#454545]" />
          <IconButton name="matprev" label="材质预览" className="bg-[#4772b3] text-white" />
          <IconButton name="rendered" label="渲染" className="bg-[#454545]" />
          <button aria-label="着色选项" className="flex w-7 items-center justify-center text-white">
            <Chevron className="size-[11px]" />
          </button>
        </div>
      </div>
      <div className="flex h-[37px] shrink-0 justify-between pl-[281px]">
        <div className="flex items-center rounded-b-md bg-[#333333]/70 pr-3 pl-[15px]">
          <Chevron className="size-[14px]" />
          <svg viewBox="0 0 22 24" className="mr-[10px] ml-[5px] h-[22px] w-5" aria-hidden="true">
            <defs>
              <linearGradient id="hex" x1="0" y1="0" x2="1" y2="1">
                <stop offset=".2" stopColor="#2ec4b6" />
                <stop offset=".5" stopColor="#7cb852" />
                <stop offset=".8" stopColor="#e0483a" />
              </linearGradient>
            </defs>
            <path d="M11 0l11 6v12l-11 6-11-6V6z" fill="url(#hex)" />
          </svg>
          <div className="flex overflow-hidden rounded-l text-[#bbb]">
            <IconButton name="object" label="物体" className="bg-[#4772b3] text-white" />
            <IconButton name="material" label="材质" className="bg-[#454545]" />
            <IconButton name="scene" label="场景" className="bg-[#454545]" />
            <IconButton name="world" label="世界" className="bg-[#454545]" />
            <IconButton name="brush" label="笔刷" className="bg-[#454545]" />
          </div>
          <Search className="mr-[2px] ml-[2px] w-[316px]" />
          <IconButton name="arc" label="折叠" className="bg-[#4a4a4a] text-[#aaa]" />
          <IconButton name="bookmark" label="书签" className="bg-[#4f4f4f]" />
          <IconMenu name="tree" label="目录" className="ml-[2px] w-[45px]" />
          <IconMenu name="funnel" label="过滤" className="w-[45px]" />
        </div>
        <div className="flex items-center rounded-bl-md bg-[#333333]/70 pr-[11px] pl-[15px]">
          <button className="flex h-7 w-[66px] items-center justify-between rounded bg-[#282828] pr-[3px] pl-2">
            选项
            <Chevron className="size-[11px]" />
          </button>
        </div>
      </div>
    </>
  );
}

function NavGizmo() {
  return (
    <svg viewBox="0 0 120 122" className="mr-[15px] h-[122px] w-[120px]" aria-hidden="true">
      <path d="M60 16v44" stroke="#3a83d0" strokeWidth="2" />
      <path d="M60 60h48" stroke="#a8304d" strokeWidth="2" />
      <circle cx="12" cy="60" r="11" fill="#6b3344" stroke="#93304a" strokeWidth="1.500" />
      <circle cx="60" cy="108" r="11" fill="#3d5470" stroke="#4470a8" strokeWidth="1.500" />
      <circle cx="60" cy="12" r="12" fill="#2f83e3" />
      <circle cx="108" cy="60" r="12" fill="#d0284f" />
      <circle cx="56" cy="60" r="12" fill="#6ca31d" />
      <circle cx="65" cy="60" r="12" fill="#55752a" stroke="#a8e05c" strokeWidth="1.500" />
      <g fontSize="15" fontWeight="700" textAnchor="middle" fill="#1a1a1a">
        <text x="60" y="18">Z</text>
        <text x="108" y="66">X</text>
      </g>
    </svg>
  );
}

function Viewport() {
  return (
    <section className="relative flex min-w-0 flex-1 flex-col overflow-hidden rounded-md">
      <SceneRender />
      <div className="relative flex min-h-0 flex-1 flex-col">
        <ViewportHeader />
        <div className="flex min-h-0 flex-1">
          <div className="ml-3 flex w-[58px] flex-col gap-2 pt-[13px]">
            {toolGroups.map((group, i) => (
              <div key={i} className="flex shrink-0 flex-col gap-px overflow-hidden rounded">
                {group.map((tool) => (
                  <button
                    key={tool}
                    aria-label={tool}
                    className={clsx(
                      "flex h-[49px] shrink-0 items-center justify-center",
                      tool === "select" ? "bg-[#4772b3]" : "bg-[#282828]",
                    )}
                  >
                    <ToolIcon name={tool} />
                  </button>
                ))}
              </div>
            ))}
          </div>
          <div className="ml-[26px] flex-1 pt-3">
            <div className="leading-[27px] text-white [text-shadow:0_1px_3px_#000]">
              <p>用户透视</p>
              <p>(247) Collection | Cube (预览器)</p>
            </div>
            <div className="mt-[117px] ml-[22px] w-[196px] text-white">
              <svg viewBox="0 0 46 60" className="h-[60px] w-[46px]" fill="none" stroke="#fff" strokeWidth="2">
                <path d="M1 30h44V14C45 5 40 1 32 1H14C6 1 1 5 1 14v24c0 28 44 28 44 0v-8M30 1v29" />
                <path d="M17 1v29H1V14C1 5 6 1 14 1z" fill="#fff" />
              </svg>
              <hr className="mt-5 border-t-2 border-white" />
              <p className="mt-[14px] text-[40px] leading-[48px]">新材质</p>
            </div>
          </div>
          <div className="flex flex-col items-end pt-4">
            <NavGizmo />
            <div className="mr-[15px] flex flex-col gap-[7px]">
              {["zoom", "hand", "movie", "persp"].map((n) => (
                <button
                  key={n}
                  aria-label={n}
                  className="flex size-[38px] items-center justify-center rounded-full bg-[#2b2b2b]"
                >
                  <Icon name={n} className="size-6" />
                </button>
              ))}
            </div>
          </div>
        </div>
        <button
          aria-label="侧栏"
          className="absolute top-24 right-0 flex h-6 w-3 items-center rounded-l bg-[#303030] text-[#999]"
        >
          <Chevron dir="left" />
        </button>
      </div>
    </section>
  );
}

const path = [
  { icon: "object", name: "Cu..." },
  { icon: "geonodes", name: "GeometryN..." },
  { icon: "nodetree", name: "Geometry N..." },
  { icon: "nodetree", name: "yidong...", users: 2 },
  { icon: "nodetree", name: "qitaceng-ji..." },
  { icon: "nodetree", name: "yimianqiang-chuang-j...", users: 4 },
  { icon: "nodetree", name: "boli-jiegou-A-B-C-...", users: 2 },
  { icon: "nodetree", name: "boli-jiego..." },
];

function Socket({ x, y, kind, dot }: { x: number; y: number; kind: "geo" | "bool" | "mat"; dot?: boolean }) {
  if (kind === "bool") {
    return (
      <g>
        <path d={`M${x} ${y - 15}l15 15-15 15-15-15z`} fill="#cca6d6" stroke="#1d1024" strokeWidth="2" />
        {dot && <circle cx={x} cy={y} r="3" fill="#2c0a3a" />}
      </g>
    );
  }
  return (
    <circle
      cx={x}
      cy={y}
      r="13"
      fill={kind === "geo" ? "#1df0a5" : "#e46a87"}
      stroke={kind === "geo" ? "#08281c" : "#2a1118"}
      strokeWidth="2"
    />
  );
}

function MaterialField({ className }: { className: string }) {
  return (
    <div className={clsx("flex h-[54px] items-center rounded-lg bg-[#1d1d1d] pr-[13px] pl-3", className)}>
      <Icon name="material" className="size-[42px]" />
      <input
        aria-label="材质"
        defaultValue="qiang-hong"
        className="ml-[17px] min-w-0 flex-1 bg-transparent text-[31px] outline-none"
      />
      <button aria-label="移除材质" className="text-[#bbb]">
        <Icon name="close" className="size-[38px]" />
      </button>
    </div>
  );
}

function NodeCanvas() {
  return (
    <div className="relative min-h-0 flex-1 overflow-hidden bg-[#2b2b2b]">
      <div className="text-[33px] leading-[40px] text-[#e6e6e6]">
        <div className="absolute inset-y-0 left-0 w-[109px] border-r-2 border-[#1a1a1a] bg-[#303030]">
          <span className="absolute top-3 left-[67px]">i</span>
          <span className="absolute top-[75px] left-[67px]">!</span>
          <span className="absolute top-[140px] left-[-6px]">c</span>
          <span className="absolute top-[138px] left-[67px]">.</span>
          <div className="absolute top-[194px] left-0 flex h-[57px] w-[76px] items-center justify-end overflow-hidden rounded-r-lg bg-[#545454]">
            <button aria-label="伪用户" className="flex h-full w-[57px] items-center justify-center bg-[#4772b3]">
              <svg viewBox="0 0 40 42" className="h-[42px] w-10">
                <path d="M20 0c6 5 12 7 20 7 0 17-4 28-20 35C4 35 0 24 0 7 8 7 14 5 20 0z" fill="#fff" />
                <path d="M11 21l7 8 13-16" fill="none" stroke="#4772b3" strokeWidth="5" />
              </svg>
            </button>
          </div>
          <div className="absolute top-[327px] left-0 flex h-[55px] w-[76px] items-center justify-end rounded-r-lg bg-[#545454] pr-10">
            00
          </div>
        </div>

        <div className="absolute top-[-40px] left-[304px] h-[242px] w-[415px] rounded-[10px] bg-[#303030] shadow-[0_2px_8px_#000]">
          <p className="absolute top-[54px] left-[30px]">几何数据</p>
          <p className="absolute top-[117px] left-[30px]">选中项</p>
          <MaterialField className="absolute top-[173px] left-[30px] w-[355px]" />
        </div>

        <div className="absolute top-7 left-[896px] h-[344px] w-[419px] overflow-hidden rounded-xl border-2 border-white bg-[#303030]">
          <h2 className="flex h-[58px] items-center bg-[#257a5c] pl-7">
            <Chevron className="size-[30px]" />
            <span className="ml-[10px]">设置材质</span>
          </h2>
          <p className="mt-[21px] mr-8 text-right">几何数据</p>
          <p className="mt-[30px] ml-[29px]">几何数据</p>
          <p className="mt-6 ml-[29px]">选中项</p>
          <MaterialField className="mt-4 ml-[28px] w-[356px]" />
        </div>

        <div className="absolute top-[142px] left-[1525px] h-[300px] w-[400px] rounded-[10px] bg-[#303030] shadow-[0_0_6px_#000]">
          <h2 className="flex h-[57px] items-center rounded-t-[10px] bg-[#257a5c] pl-7">
            <Chevron className="size-[30px]" />
          </h2>
          <p className="absolute top-[150px] left-[30px]">几何数据</p>
          <p className="absolute top-[213px] left-[30px]">选中项</p>
        </div>
      </div>

      <svg className="pointer-events-none absolute inset-0 size-full" aria-hidden="true">
        <g fill="none" stroke="#0d0d0d" strokeWidth="12" opacity=".6">
          <path d="M190 -8C225 12 260 31 304 32" />
          <path d="M763 -10C812 92 838 197 897 199" />
          <path d="M1312 128C1400 128 1440 312 1525 312" />
        </g>
        <g fill="none" stroke="#bdf7e0" strokeWidth="8">
          <path d="M190 -8C225 12 260 31 304 32" stroke="#1fe39c" />
          <path d="M763 -10C812 92 838 197 897 199" />
          <path d="M1312 128C1400 128 1440 312 1525 312" />
        </g>
        <Socket x={108} y={31} kind="bool" />
        <Socket x={108} y={94} kind="bool" />
        <Socket x={108} y={157} kind="bool" />
        <Socket x={304} y={33} kind="geo" />
        <Socket x={304} y={96} kind="bool" dot />
        <Socket x={304} y={159} kind="mat" />
        <Socket x={897} y={199} kind="geo" />
        <Socket x={897} y={262} kind="bool" dot />
        <Socket x={897} y={326} kind="mat" />
        <Socket x={1312} y={128} kind="geo" />
        <Socket x={1525} y={312} kind="geo" />
        <Socket x={1525} y={375} kind="bool" dot />
      </svg>

      <nav className="absolute top-[18px] left-[110px] flex h-7 items-center whitespace-nowrap text-[#d6d6d6]">
        {path.map((p, i) => (
          <div key={i} className="flex items-center">
            {i > 0 && <Chevron dir="right" className="mr-2 ml-[13px] size-[14px]" />}
            <span className="relative">
              <Icon name={p.icon} className="size-[23px]" />
              {p.users && <span className="absolute right-[-5px] bottom-[-4px] text-[13px] leading-4">{p.users}</span>}
            </span>
            <a href="#" className="ml-[13px]">
              {p.name}
            </a>
          </div>
        ))}
      </nav>

      <div className="absolute top-[13px] left-[13px] flex w-[58px] flex-col gap-[9px]">
        {["boxselect", "annotate", "cut"].map((t) => (
          <button
            key={t}
            aria-label={t}
            className={clsx(
              "flex h-12 items-center justify-center rounded",
              t === "boxselect" ? "bg-[#4772b3]" : "bg-[#282828]",
            )}
          >
            <ToolIcon name={t} />
          </button>
        ))}
      </div>
      <div className="absolute bottom-[2px] left-[917px] h-[6px] w-[331px] rounded bg-[#3b3b3b]" />
      <div className="absolute top-[50px] right-[3px] h-[90px] w-[6px] rounded bg-[#3b3b3b]" />
      <button
        aria-label="侧栏"
        className="absolute top-5 right-0 flex h-6 w-3 items-center rounded-l bg-[#262626] text-[#999]"
      >
        <Chevron dir="left" />
      </button>
    </div>
  );
}

function NodeEditor() {
  return (
    <section className="flex min-h-0 flex-[439_1_0] flex-col overflow-hidden rounded-md">
      <div className="flex h-[37px] shrink-0 items-center bg-[#1d1d1d] pr-[11px] pl-3">
        <IconMenu name="geonodes" label="编辑器类型" />
        <Dropdown label="几何节点类型" value="修改器" className="ml-[9px] w-[102px] pl-[10px]" />
        <div className="ml-[6px]">
          <Menus items={["视图", "选择", "添加", "节点"]} />
        </div>
        <div className="ml-[214px] flex shrink-0 items-center overflow-hidden rounded bg-[#161616]">
          <IconMenu name="nodetree" label="浏览节点树" className="w-[46px] rounded-none" />
          <input
            aria-label="节点树"
            defaultValue="Geometry Nodes"
            className="w-[152px] bg-transparent pl-[11px] outline-none"
          />
          <IconButton name="shield" label="伪用户" className="bg-[#4f4f4f] text-[#aaa]" />
          <IconButton name="copy" label="新建节点树" className="w-[30px] bg-[#4f4f4f]" />
          <IconButton name="close" label="断开" className="bg-[#4f4f4f]" />
        </div>
        <Icon name="pin" className="ml-3 size-[22px] text-[#888]" />
        <IconButton name="parent" label="上级节点树" className="ml-auto rounded bg-[#4a4a4a]" />
        <div className="ml-[7px] flex shrink-0 overflow-hidden rounded">
          <IconButton name="magnet" label="吸附" className="bg-[#454545] text-[#999]" />
          <IconMenu name="snapgrid" label="吸附节点元素" className="w-[46px] rounded-none" />
        </div>
        <div className="ml-[9px] flex shrink-0 overflow-hidden rounded bg-[#282828]">
          <IconButton name="overlay" label="叠加层" className="bg-[#4772b3]" />
          <button aria-label="叠加层选项" className="flex w-7 items-center justify-center">
            <Chevron className="size-[11px]" />
          </button>
        </div>
      </div>
      <NodeCanvas />
    </section>
  );
}

const frames = [70, 80, 90, 100, 110, 120, 130, 140, 150, 160, 170, 180, 190, 200, 210, 220, 230, 240];

function Timeline() {
  return (
    <section className="flex h-[75px] shrink-0 flex-col overflow-hidden rounded-t-md">
      <div className="flex h-[39px] shrink-0 items-center bg-[#303030] pr-[11px] pl-3">
        <IconMenu name="clock" label="编辑器类型" />
        <div className="ml-[9px] flex shrink-0 gap-px">
          {["回放", "插帧"].map((t) => (
            <button key={t} className="flex h-7 w-[69px] items-center justify-between rounded bg-[#282828] pr-[5px] pl-[10px]">
              {t}
              <Chevron className="size-[11px]" />
            </button>
          ))}
        </div>
        <div className="ml-[5px]">
          <Menus items={["视图", "标记"]} />
        </div>
        <div className="mr-[21px] ml-auto flex items-center">
          <IconButton name="record" label="自动插帧" className="rounded bg-[#4f4f4f] text-[#aaa]" />
          <span className="mr-[9px] flex h-7 w-7 items-center justify-center text-[#555]">
            <Chevron className="size-[11px]" />
          </span>
          <div className="flex gap-px overflow-hidden rounded">
            {["first", "prevKey", "back", "play", "nextKey", "last"].map((n) => (
              <button key={n} aria-label={n} className="flex h-7 w-7 items-center justify-center bg-[#4f4f4f]">
                <Icon name={n} className="size-5" />
              </button>
            ))}
          </div>
        </div>
        <div className="ml-[250px] flex shrink-0 items-center">
          <input
            aria-label="当前帧"
            defaultValue="247"
            className="h-7 w-[106px] rounded bg-[#4f4f4f] text-center outline-none"
          />
          <IconButton name="stopwatch" label="使用预览范围" className="ml-[9px] rounded-l bg-[#454545]" />
          <label className="ml-px flex h-7 w-[127px] items-center justify-between bg-[#4f4f4f] px-[23px]">
            起始
            <input defaultValue="1" className="w-8 bg-transparent text-right outline-none" />
          </label>
          <label className="ml-px flex h-7 w-[127px] items-center justify-between rounded-r bg-[#4f4f4f] px-[22px]">
            结束
            <input defaultValue="250" className="w-10 bg-transparent text-right outline-none" />
          </label>
        </div>
      </div>
      <div className="relative flex-1 overflow-hidden bg-[#1c1c1c] text-[#a0a0a0]">
        <div className="flex justify-between pt-[5px] pr-[58px] pl-[7px]">
          {frames.map((f) => (
            <span key={f} className="w-10 text-center leading-6">
              {f}
            </span>
          ))}
        </div>
        <div className="absolute right-0 bottom-[7px] w-10 rounded-l bg-[#4772b3] pr-1 text-right leading-6 text-white">
          247
        </div>
        <div className="absolute right-[76px] bottom-[2px] left-[449px] flex h-[13px] items-center justify-between rounded-full bg-[#545454]">
          <span className="size-[13px] rounded-full border-2 border-[#545454] bg-[#333]" />
          <span className="size-[13px] rounded-full border-2 border-[#545454] bg-[#333]" />
        </div>
        <Chevron dir="right" className="absolute bottom-0 left-0 size-3 text-[#777]" />
      </div>
    </section>
  );
}

function OutlinerRow({ children, toggles }: { children: ReactNode; toggles?: ReactNode }) {
  return (
    <li className="flex h-[29px] items-center">
      {children}
      <div className="ml-auto flex items-center gap-[9px]">{toggles}</div>
    </li>
  );
}

function Outliner() {
  const restrict = (
    <>
      <Icon name="eye" className="size-5" />
      <Icon name="camera" className="size-[21px]" />
    </>
  );
  return (
    <section className="flex min-h-0 flex-[276_1_0] flex-col overflow-hidden rounded-md bg-[#282828]">
      <div className="flex h-[37px] shrink-0 items-center bg-[#2d2d2d] pl-[10px]">
        <IconMenu name="outliner" label="编辑器类型" />
        <IconMenu name="layers" label="显示模式" className="ml-3" />
        <Search className="ml-[21px] w-[174px] shrink-0" />
        <Icon name="funnelLine" className="ml-[26px] size-[22px]" />
      </div>
      <ul className="flex-1 pt-[2px] pr-[19px] text-[#c8c8c8]">
        <OutlinerRow>
          <Icon name="collection" className="ml-[34px] size-[22px] text-[#e6e6e6]" />
          <span className="ml-[7px]">场景集合</span>
        </OutlinerRow>
        <OutlinerRow
          toggles={
            <>
              <span className="relative flex">
                <input
                  type="checkbox"
                  aria-label="排除 Collection"
                  defaultChecked
                  className="size-4 appearance-none rounded-xs bg-[#e6e6e6]"
                />
                <svg viewBox="0 0 16 16" className="pointer-events-none absolute inset-0 size-4" aria-hidden="true">
                  <path d="M3 8l4 4 6-8" fill="none" stroke="#1d1d1d" strokeWidth="2.500" />
                </svg>
              </span>
              {restrict}
            </>
          }
        >
          <Chevron className="ml-9 size-[14px]" />
          <span className="ml-[8px] flex size-7 items-center justify-center rounded bg-[#4a4a4a] text-[#e6e6e6]">
            <Icon name="collection" />
          </span>
          <span className="ml-[6px]">Collection</span>
        </OutlinerRow>
        <OutlinerRow toggles={restrict}>
          <span className="ml-[42px] h-4 w-px bg-[#555]" />
          <Chevron dir="right" className="ml-[24px] size-[14px]" />
          <span className="ml-[6px] flex size-7 items-center justify-center rounded bg-[#4a4a4a] text-[#cf8b4c]">
            <Icon name="cone" />
          </span>
          <span className="ml-[6px]">Cube</span>
          <Icon name="wrench" className="ml-[32px] size-[22px] text-[#7489c4]" />
          <Icon name="mesh" className="ml-[6px] size-[22px] text-[#2fb98a]" />
        </OutlinerRow>
      </ul>
      <div className="mr-5 mb-px ml-3 h-[5px] rounded bg-[#3a3a3a]" />
    </section>
  );
}

const tabs = [
  { icon: "tool", color: "text-[#c0c0c0]", box: "h-[51px]" },
  { icon: "render", color: "text-[#c0c0c0]", box: "h-10 mt-[5px]" },
  { icon: "output", color: "text-[#c0c0c0]", box: "h-10" },
  { icon: "layers", color: "text-[#c0c0c0]", box: "h-10" },
  { icon: "scene", color: "text-[#c0c0c0]", box: "h-10" },
  { icon: "world", color: "text-[#c2556a]", box: "h-10" },
  { icon: "archive", color: "text-[#d8d8d8]", box: "h-10 mt-3" },
  { icon: "object", color: "text-[#cf8b4c]", box: "h-10 mt-[10px]" },
  { icon: "wrenchFill", color: "text-[#7496dc]", box: "h-10" },
  { icon: "particles", color: "text-[#6f92d0]", box: "h-10" },
  { icon: "physics", color: "text-[#7fa0dc]", box: "h-10" },
  { icon: "constraint", color: "text-[#8d9fd6]", box: "h-10" },
  { icon: "mesh", color: "text-[#2fb98a]", box: "h-10" },
  { icon: "material", color: "text-[#d9576f]", box: "h-[46px] rounded-l bg-[#303030] -my-[3px]" },
  { icon: "checker", color: "text-[#c05b6e]", box: "h-10 mt-[13px]" },
];

const slots = [
  { name: "lumian-ding-lv", ball: "bg-[radial-gradient(circle_at_35%_35%,#b5e09a,#6aa650_60%,#223d18)]" },
  { name: "lumian-ding-she...", ball: "bg-[radial-gradient(circle_at_35%_35%,#f5b79c,#cf7d5c_60%,#5a2c1c)]" },
  { name: "qiang-hong", ball: "bg-[radial-gradient(circle_at_35%_35%,#f08080,#c0363d_60%,#4a1013)]" },
  { name: "qiang-boli", ball: "bg-[radial-gradient(circle_at_35%_35%,#b4e0e4,#6fb0b8_60%,#27474b)]" },
];

type Prop = { label: string; dot: string; text: string; fill?: number; kind: "menu" | "color" | "slider"; anim?: boolean; gap?: boolean };

const surface: Prop[] = [
  { label: "表(曲)面", dot: "bg-[#63c763]", text: "原理化 BS...", kind: "menu", gap: true },
  { label: "基础色", dot: "bg-[#c7c729]", text: "", kind: "color", anim: true },
  { label: "金属度", dot: "bg-[#a1a1a1]", text: "0.000", fill: 0, kind: "slider", anim: true },
  { label: "糙度", dot: "bg-[#a1a1a1]", text: "0.500", fill: 50, kind: "slider", anim: true },
  { label: "折射率(I...", dot: "bg-[#a1a1a1]", text: "1.500", fill: 0, kind: "slider", anim: true },
  { label: "Alpha", dot: "bg-[#a1a1a1]", text: "1.000", fill: 100, kind: "slider", anim: true },
  { label: "法向", dot: "bg-[#6363c7]", text: "默认", kind: "menu" },
];

function PropRow({ p }: { p: Prop }) {
  return (
    <div className={clsx("flex h-9 items-center", p.gap && "mb-[15px]")}>
      <span className="w-[94px] text-right">{p.label}</span>
      <div className="ml-[15px] flex h-7 w-[127px] overflow-hidden rounded bg-[#282828]">
        <span className="flex w-[27px] shrink-0 items-center justify-center">
          <span className={clsx("size-3 rounded-full border border-black", p.dot)} />
        </span>
        {p.kind === "menu" && <button className="flex-1 truncate pl-[3px] text-left">{p.text}</button>}
        {p.kind === "color" && <button aria-label={p.label} className="flex-1 bg-[#e7e7e7]" />}
        {p.kind === "slider" && (
          <div className="relative flex-1 bg-[#545454] text-center leading-7">
            <div className="absolute inset-y-0 left-0 bg-[#4772b3]" style={{ width: `${p.fill}%` }} />
            <span className="relative">{p.text}</span>
            <input
              type="range"
              aria-label={p.label}
              defaultValue={p.fill}
              className="absolute inset-0 size-full cursor-pointer opacity-0"
            />
          </div>
        )}
      </div>
      {p.anim && <span className="ml-[13px] size-[6px] rounded-full bg-[#d8d8d8]" />}
    </div>
  );
}

function Grip() {
  return (
    <svg viewBox="0 0 16 8" className="h-2 w-4 shrink-0" aria-hidden="true">
      <path d="M1 1h14M1 6h14" stroke="#aaa" strokeWidth="2" strokeDasharray="2 2" />
    </svg>
  );
}

function Triangle({ up }: { up?: boolean }) {
  return (
    <svg viewBox="0 0 12 12" className="size-3" aria-hidden="true">
      <path d={up ? "M0 11h12L6 0z" : "M0 1h12L6 12z"} fill="currentColor" />
    </svg>
  );
}

function Properties() {
  return (
    <section className="flex min-h-0 flex-[695_1_0] flex-col overflow-hidden rounded-t-md bg-[#303030]">
      <div className="flex h-[37px] shrink-0 items-center pr-[14px] pl-[14px]">
        <IconMenu name="props" label="编辑器类型" />
        <Search className="ml-[34px] w-[171px]" />
        <button aria-label="选项" className="ml-auto flex size-7 items-center justify-center rounded bg-[#282828]">
          <Chevron className="size-[11px]" />
        </button>
      </div>
      <div className="flex min-h-0 flex-1">
        <div role="tablist" className="flex w-[43px] shrink-0 flex-col bg-[#1d1d1d] pt-[6px]">
          {tabs.map((t) => (
            <button
              key={t.icon}
              role="tab"
              aria-label={t.icon}
              aria-selected={t.icon === "material"}
              className={clsx("ml-[5px] flex shrink-0 items-center justify-center", t.box, t.color)}
            >
              <Icon name={t.icon} />
            </button>
          ))}
        </div>
        <div className="flex min-w-0 flex-1 flex-col overflow-hidden">
          <div className="flex h-[52px] shrink-0 items-center pr-[15px] pl-4">
            <Icon name="object" />
            <span className="ml-[13px]">Cu...</span>
            <Chevron dir="right" className="mr-[9px] ml-[10px] size-[14px]" />
            <Icon name="material" />
            <span className="ml-[13px]">Material....</span>
            <Icon name="pin" className="ml-auto size-[22px] text-[#999]" />
          </div>
          <div className="mt-[14px] flex shrink-0 justify-between pr-[13px] pl-[14px]">
            <div className="flex h-[171px] w-[233px] rounded border border-[#3d3d3d] bg-[#252525]">
              <div className="flex-1 pt-1">
                <ul>
                  {slots.map((s) => (
                    <li key={s.name} className="flex h-[29px] items-center pl-[11px] text-[#c8c8c8]">
                      <span className={clsx("size-[19px] shrink-0 rounded-full", s.ball)} />
                      <span className="ml-[13px] whitespace-nowrap">{s.name}</span>
                    </li>
                  ))}
                  <li className="mt-px ml-[5px] flex h-[27px] w-[195px] items-center rounded bg-[#4772b3] pl-[6px]">
                    <span className="size-[19px] shrink-0 rounded-full bg-[radial-gradient(circle_at_35%_35%,#f2f2f2,#b9b9b9_60%,#555)]" />
                    <label className="ml-[13px] flex items-center">
                      <span className="sr-only">材质名称</span>
                      <input defaultValue="q" className="w-[11px] border-r border-[#8fc0ff] bg-transparent text-white outline-none" />
                    </label>
                    <svg viewBox="0 0 14 26" className="mt-2 ml-7 h-[26px] w-[14px] shrink-0" aria-hidden="true">
                      <path d="M1 2h12M7 2v22" stroke="#9a9a9a" strokeWidth="2" fill="none" />
                      <path d="M0 24h14" stroke="#fff" strokeWidth="2" />
                    </svg>
                  </li>
                </ul>
                <div className="flex h-4 items-center pl-[14px] text-[#bbb]">
                  <svg viewBox="0 0 9 10" className="h-[10px] w-[9px]">
                    <path d="M0 0l9 5-9 5z" fill="currentColor" />
                  </svg>
                  <span className="ml-[98px] flex">
                    <Grip />
                  </span>
                </div>
              </div>
              <div className="mt-[3px] mb-[17px] flex w-[23px] flex-col justify-end border-l border-[#303030] pl-1">
                <div className="h-[29px] w-[14px] rounded-md bg-[#545454]" />
              </div>
            </div>
            <div className="flex w-[27px] flex-col">
              <button aria-label="添加材质槽" className="flex h-[27px] items-center justify-center rounded-t bg-[#4f4f4f]">
                <Icon name="plus" className="size-[17px]" />
              </button>
              <button aria-label="移除材质槽" className="mt-px flex h-[27px] items-center justify-center rounded-b bg-[#4f4f4f]">
                <Icon name="minus" className="size-[17px]" />
              </button>
              <button aria-label="材质槽" className="mt-[11px] flex h-7 items-center justify-center rounded bg-[#282828]">
                <Chevron className="size-[14px]" />
              </button>
              <button aria-label="上移" className="mt-2 flex h-7 items-center justify-center rounded-t bg-[#4f4f4f]">
                <Triangle up />
              </button>
              <button aria-label="下移" className="mt-px flex h-7 items-center justify-center rounded-b bg-[#4f4f4f]">
                <Triangle />
              </button>
            </div>
          </div>
          <div className="mt-2 flex shrink-0 items-center pr-[13px] pl-[14px]">
            <div className="flex overflow-hidden rounded bg-[#1d1d1d]">
              <IconMenu name="material" label="浏览材质" className="w-[44px] rounded-none" />
              <input aria-label="材质名" defaultValue="Materi..." className="w-[88px] bg-transparent pl-[11px] outline-none" />
              <IconButton name="shield" label="伪用户" className="bg-[#4f4f4f] text-[#aaa]" />
              <IconButton name="copy" label="新建材质" className="w-[30px] bg-[#4f4f4f]" />
              <IconButton name="close" label="断开" className="bg-[#4f4f4f]" />
            </div>
            <IconMenu name="mesh" label="链接到" className="ml-auto w-[42px]" />
          </div>
          <div className="mt-4 mr-[14px] ml-3 flex min-h-0 flex-1 flex-col gap-[3px]">
            <button className="flex h-[35px] shrink-0 items-center rounded bg-[#3d3d3d] pr-[10px] pl-3">
              <Chevron dir="right" className="size-[14px] text-[#aaa]" />
              <span className="mr-auto ml-[4px]">预览</span>
              <Grip />
            </button>
            <div className="flex min-h-0 flex-1 flex-col rounded-t bg-[#3d3d3d]">
              <button className="flex h-[35px] shrink-0 items-center pr-[10px] pl-3">
                <Chevron className="size-[14px] text-[#aaa]" />
                <span className="mr-auto ml-[4px]">表(曲)面</span>
                <Grip />
              </button>
              <div className="mt-2 shrink-0">
                {surface.map((p, i) => (
                  <PropRow key={i} p={p} />
                ))}
              </div>
              <button className="flex h-8 shrink-0 items-center pl-[21px]">
                <Chevron dir="right" className="size-[14px] text-[#aaa]" />
                <span className="ml-[15px]">次表面</span>
              </button>
            </div>
          </div>
        </div>
      </div>
    </section>
  );
}

const hints = [
  { name: "设置活动修改器", d: "M1 9V5c0-3 2-4 4-4h4v8z" },
  { name: "平移视图", d: "M6 4h6v9H6z" },
  { name: "上下文菜单", d: "M17 9V5c0-3-2-4-4-4H9v8z" },
];

const stats = [
  "Collection", "Cube", "顶点:19,240", "面:11,754", "三角面:23,796", "物体:0/20",
  "时长: 00:10+10 (帧 247/250)", "内存: 110.3 MiB", "显存: 1.3/6.0 GiB",
];

function StatusBar() {
  return (
    <footer className="relative flex h-[31px] shrink-0 items-center overflow-hidden bg-[#181818] pl-[17px] whitespace-nowrap text-[#989898]">
      {hints.map((h) => (
        <div key={h.name} className="flex w-[283px] shrink-0 items-center">
          <svg viewBox="0 0 18 24" className="h-6 w-[18px]" aria-hidden="true">
            <rect x="1" y="1" width="16" height="22" rx="4" fill="none" stroke="currentColor" strokeWidth="1.500" />
            <path d={h.d} fill="currentColor" />
          </svg>
          <span className="ml-[6px]">{h.name}</span>
        </div>
      ))}
      <div className="ml-[25px] flex items-center divide-x divide-[#777] leading-5">
        {stats.map((s) => (
          <span key={s} className="px-[7px]">
            {s}
          </span>
        ))}
      </div>
    </footer>
  );
}

function Watermark() {
  return (
    <div className="pointer-events-none absolute bottom-3 left-[11px] flex items-center gap-2 text-[#999] opacity-50">
      <svg viewBox="0 0 39 38" className="h-[38px] w-[39px]" aria-hidden="true">
        <path
          fillRule="evenodd"
          fill="currentColor"
          d="M5 0h29c3 0 5 2 5 5v28c0 3-2 5-5 5H5c-3 0-5-2-5-5V5c0-3 2-5 5-5zm3 12c4-8 15-8 22-4l-3 4c5 3 6 9 3 13l-5 3c3-6-2-9-7-10-6-1-10-1-10-6zm0 12h8v7H8z"
        />
      </svg>
      <span className="font-['DejaVu_Sans'] text-[33px] leading-9 font-bold">tafe.cc</span>
    </div>
  );
}

export default function App() {
  return (
    <div className="relative flex h-screen w-full flex-col overflow-hidden bg-[#161616] font-['Inter','Noto_Sans_CJK_SC',sans-serif] text-[17px] leading-6 whitespace-nowrap text-[#e0e0e0]">
      <TitleBar />
      <TopBar />
      <main className="flex min-h-0 flex-1 gap-[3px]">
        <div className="flex min-w-0 flex-1 flex-col gap-[2px]">
          <div className="flex min-h-0 flex-[457_1_0] gap-[3px]">
            <Spreadsheet />
            <Viewport />
          </div>
          <NodeEditor />
          <Timeline />
        </div>
        <aside className="flex w-[346px] shrink-0 flex-col gap-1">
          <Outliner />
          <Properties />
        </aside>
      </main>
      <StatusBar />
      <Watermark />
    </div>
  );
}
